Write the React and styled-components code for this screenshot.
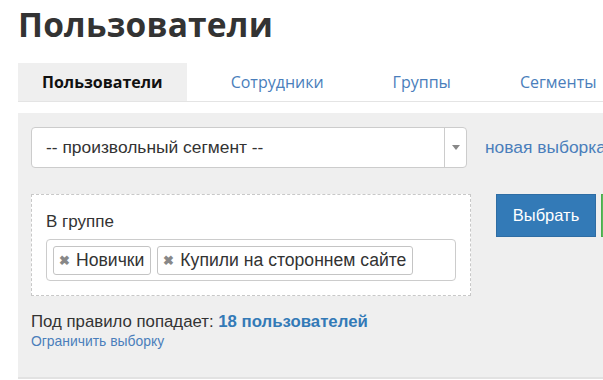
import React from "react";
import styled, { createGlobalStyle } from "styled-components";

const GlobalStyle = createGlobalStyle`
  html, body {
    margin: 0;
    padding: 0;
    background: #fff;
    overflow: hidden;
  }
  body {
    font-family: "Liberation Sans", Arial, sans-serif;
    color: #333;
  }
`;

const Page = styled.div`
  width: 603px;
  height: 380px;
  padding: 0 0 0 18px;
  box-sizing: border-box;
  overflow: hidden;
`;

const Title = styled.h1`
  margin: 0;
  padding-top: 3px;
  height: 60px;
  font-family: "Open Sans", sans-serif;
  font-weight: 700;
  font-size: 33.5px;
  line-height: 42px;
  letter-spacing: 0.2px;
  color: #333;
`;

const Tabs = styled.div`
  display: flex;
  gap: 19px;
  height: 38px;
  border-bottom: 1px solid #e4e4e4;
  white-space: nowrap;
`;

const Tab = styled.div`
  display: flex;
  align-items: center;
  padding: 0 ${({ active }) => (active ? "24px" : "25px")};
  font-family: "Open Sans", sans-serif;
  font-size: 16px;
  font-weight: ${({ active }) => (active ? 700 : 400)};
  color: ${({ active }) => (active ? "#111" : "#4a7ebb")};
  background: ${({ active }) => (active ? "#efefef" : "transparent")};
`;

const Panel = styled.div`
  margin-top: 11px;
  height: 266px;
  background: #efefef;
  border-bottom: 2px solid #e2e2e2;
  padding: 14px 0 0 13px;
  box-sizing: border-box;
  overflow: hidden;
`;

const Row = styled.div`
  display: flex;
  align-items: center;
  gap: 18px;
  white-space: nowrap;
`;

const Select = styled.div`
  display: flex;
  flex-shrink: 0;
  width: 436px;
  height: 41px;
  background: #fff;
  border: 1px solid #ccc;
  border-radius: 4px;
  box-sizing: border-box;
`;

const SelectText = styled.div`
  flex: 1;
  display: flex;
  align-items: center;
  padding-left: 14px;
  font-size: 17.4px;
  color: #333;
`;

const SelectArrow = styled.div`
  width: 21px;
  border-left: 1px solid #ccc;
  display: flex;
  align-items: center;
  justify-content: center;
  &::after {
    content: "";
    border-left: 4px solid transparent;
    border-right: 4px solid transparent;
    border-top: 5px solid #888;
  }
`;

const Link = styled.a`
  color: ${({ bold }) => (bold ? "#337ab7" : "#4a7ebb")};
  font-size: ${({ size }) => size};
  font-weight: ${({ bold }) => (bold ? 700 : 400)};
  text-decoration: none;
  cursor: pointer;
`;

const FilterRow = styled.div`
  display: flex;
  align-items: flex-start;
  gap: 25px;
  margin-top: 26px;
`;

const RuleBox = styled.div`
  flex-shrink: 0;
  width: 440px;
  height: 102px;
  box-sizing: border-box;
  background: #fff;
  border: 1px dashed #c8c8c8;
  padding: 17px 14px 0 14px;
`;

const Label = styled.div`
  font-size: 17px;
  line-height: 20px;
  color: #333;
`;

const TagInput = styled.div`
  display: flex;
  align-items: center;
  gap: 6px;
  margin-top: 7px;
  height: 42px;
  box-sizing: border-box;
  border: 1px solid #ccc;
  border-radius: 4px;
  padding: 0 6px;
`;

const Tag = styled.span`
  display: inline-flex;
  align-items: center;
  gap: 6px;
  height: 29px;
  box-sizing: border-box;
  padding: 0 6px 0 5px;
  border: 1px solid #c4c4c4;
  border-radius: 3px;
  background: #fff;
  font-size: 17.6px;
  color: #333;
  white-space: nowrap;
`;

const TagRemove = styled.span`
  font-size: 13px;
  font-weight: 700;
  color: #888;
  line-height: 1;
`;

const Buttons = styled.div`
  display: flex;
  gap: 5px;
`;

const Button = styled.button`
  height: 43px;
  width: ${({ wide }) => (wide ? "100px" : "90px")};
  border: 1px solid ${({ green }) => (green ? "#4cae4c" : "#2e6da4")};
  background: ${({ green }) => (green ? "#5cb85c" : "#337ab7")};
  color: #fff;
  font-family: "Liberation Sans", Arial, sans-serif;
  font-size: 16.5px;
  padding: 0;
  flex-shrink: 0;
`;

const Summary = styled.div`
  margin-top: 16px;
  font-size: 16.8px;
  line-height: 20px;
  color: #333;
  white-space: nowrap;
`;

const Limit = styled.div`
  margin-top: 1px;
  line-height: 16px;
`;

export default function App() {
  return (
    <>
      <GlobalStyle />
      <Page>
        <Title>Пользователи</Title>
        <Tabs>
          <Tab active>Пользователи</Tab>
          <Tab>Сотрудники</Tab>
          <Tab>Группы</Tab>
          <Tab>Сегменты</Tab>
        </Tabs>
        <Panel>
          <Row>
            <Select>
              <SelectText>-- произвольный сегмент --</SelectText>
              <SelectArrow />
            </Select>
            <Link size="17.4px">новая выборка</Link>
          </Row>
          <FilterRow>
            <RuleBox>
              <Label>В группе</Label>
              <TagInput>
                <Tag>
                  <TagRemove>✖</TagRemove>Новички
                </Tag>
                <Tag>
                  <TagRemove>✖</TagRemove>Купили на стороннем сайте
                </Tag>
              </TagInput>
            </RuleBox>
            <Buttons>
              <Button wide>Выбрать</Button>
              <Button green aria-label="Сохранить" />
            </Buttons>
          </FilterRow>
          <Summary>
            Под правило попадает:{" "}
            <Link bold as="span" size="16.8px">
              18 пользователей
            </Link>
          </Summary>
          <Limit>
            <Link size="13.9px">Ограничить выборку</Link>
          </Limit>
        </Panel>
      </Page>
    </>
  );
}
